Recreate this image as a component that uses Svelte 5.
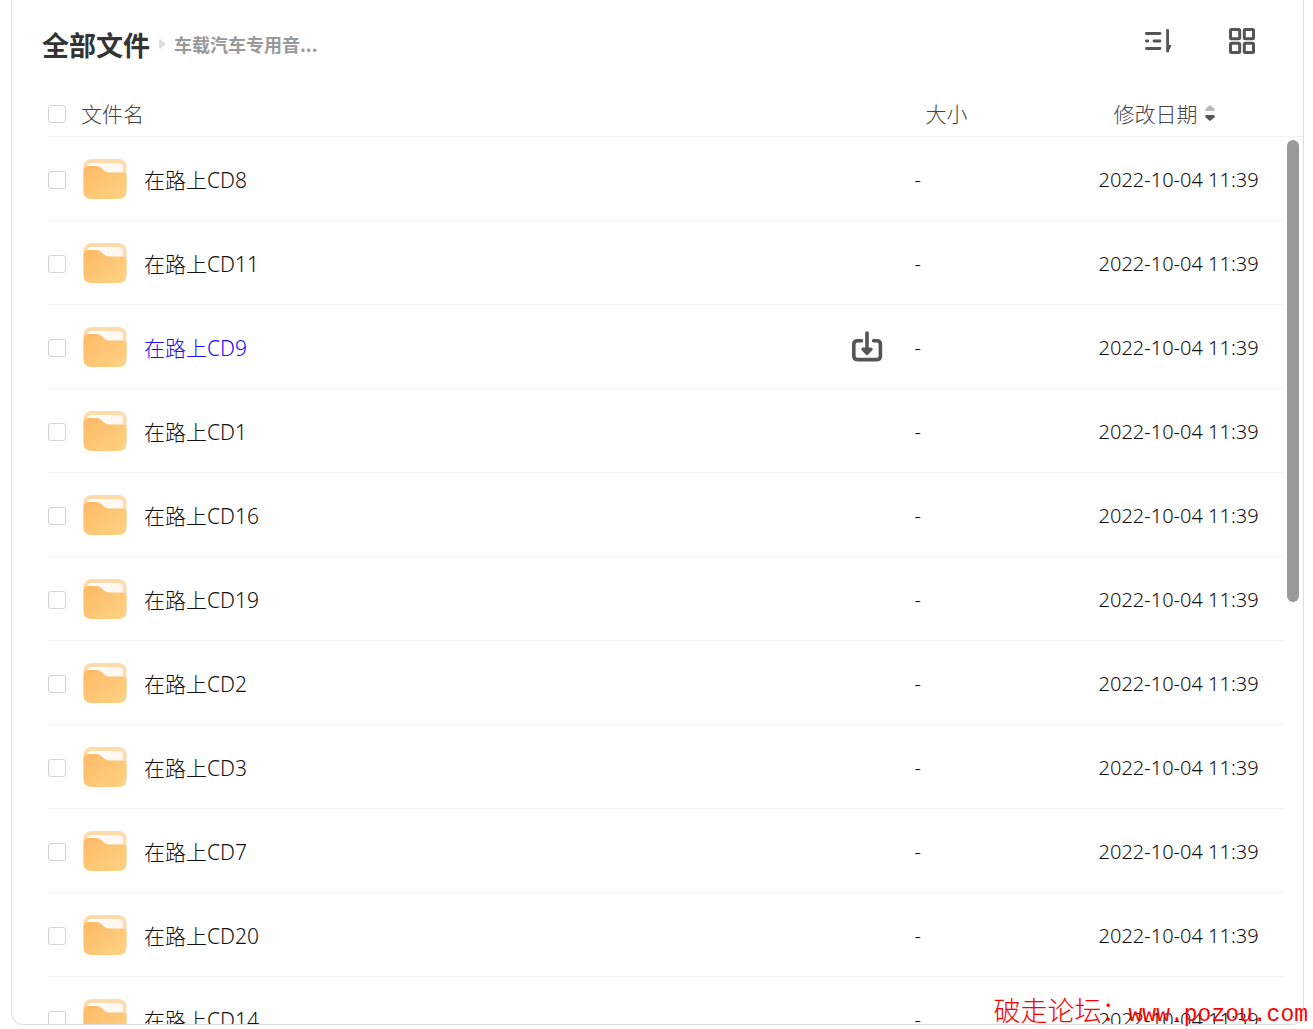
<script lang="ts">
  const names = [
    '在路上CD8',
    '在路上CD11',
    '在路上CD9',
    '在路上CD1',
    '在路上CD16',
    '在路上CD19',
    '在路上CD2',
    '在路上CD3',
    '在路上CD7',
    '在路上CD20',
    '在路上CD14'
  ];

  let files = $state(
    names.map((name) => ({ name, size: '-', date: '2022-10-04 11:39', checked: false }))
  );
  let active = $state('在路上CD9');

  let allChecked = $derived(files.every((file) => file.checked));

  function toggleAll() {
    const next = !allChecked;
    files.forEach((file) => (file.checked = next));
  }
</script>

<main class="page">
  <section class="panel">
    <header class="toolbar">
      <nav class="crumbs">
        <a class="root" href="#all">全部文件</a>
        <svg class="arrow" viewBox="0 0 8 12" aria-hidden="true">
          <path d="M1 2.2C1 1.2 2 1 2.8 1.7L6.8 5.1C7.4 5.6 7.4 6.4 6.8 6.9L2.8 10.3C2 11 1 10.8 1 9.8Z" fill="#ddd" />
        </svg>
        <a class="current" href="#folder">车载汽车专用音...</a>
      </nav>
      <div class="tools">
        <button aria-label="排序">
          <svg width="28" height="28" viewBox="0 0 28 28" fill="none" stroke="#555" stroke-width="2.8" stroke-linecap="round">
            <path d="M2.4 6.5H16M2.4 14H3.8M10 14H16M2.4 21.5H16" />
            <path d="M23.6 3.5V24" />
            <path d="M24.2 18.8H26.6L23.6 24.4Z" fill="#555" stroke-width="1.6" stroke-linejoin="round" />
          </svg>
        </button>
        <button aria-label="网格视图">
          <svg width="28" height="28" viewBox="0 0 28 28" fill="none" stroke="#555" stroke-width="3">
            <rect x="2.5" y="2.5" width="9.2" height="9.2" rx="1" />
            <rect x="16.3" y="2.5" width="9.2" height="9.2" rx="1" />
            <rect x="2.5" y="16.3" width="9.2" height="9.2" rx="1" />
            <rect x="16.3" y="16.3" width="9.2" height="9.2" rx="1" />
          </svg>
        </button>
      </div>
    </header>

    <div class="list">
      <table>
        <thead>
          <tr>
            <th><input type="checkbox" aria-label="全选" checked={allChecked} onchange={toggleAll} /></th>
            <th>文件名</th>
            <th></th>
            <th class="size">大小</th>
            <th class="date">
              <button class="sort">
                修改日期
                <svg width="10" height="16" viewBox="0 0 10 16" aria-hidden="true">
                  <path d="M4.2 .6Q5 0 5.8 .6L9.4 3.8Q10.2 6 8.8 6H1.2Q-.2 6 .6 3.8Z" fill="#bbb" />
                  <path d="M4.2 15.4Q5 16 5.8 15.4L9.4 12.2Q10.2 10 8.8 10H1.2Q-.2 10 .6 12.2Z" fill="#555" />
                </svg>
              </button>
            </th>
          </tr>
        </thead>
        <tbody>
          {#each files as file}
            <tr onmouseenter={() => (active = file.name)}>
              <td><input type="checkbox" aria-label={file.name} bind:checked={file.checked} /></td>
              <td class="name">
                <svg width="48" height="44" viewBox="0 -1 48 44" aria-hidden="true">
                  <defs>
                    <linearGradient id="front" x1="0" y1="0" x2="1" y2="1">
                      <stop offset="0" stop-color="#ffb966" />
                      <stop offset="1" stop-color="#fcd382" />
                    </linearGradient>
                    <linearGradient id="paper" x1="0" y1="0" x2="1" y2="0">
                      <stop offset="0" stop-color="#fff" />
                      <stop offset="1" stop-color="#fff6ee" />
                    </linearGradient>
                  </defs>
                  <rect x="2.5" y="1" width="43" height="38" rx="8" fill="#ffdaaa" />
                  <path d="M6 9Q7 5 11 5H38Q42 5 42 9V17H6Z" fill="url(#paper)" />
                  <path d="M2.5 13Q2.5 8 8 8H15.5Q18.5 8 20.5 10L23 12.5Q25 14.6 28 14.6H41Q45.5 14.6 45.5 18V33Q45.5 41 37.5 41H10.5Q2.5 41 2.5 33Z" fill="url(#front)" />
                </svg>
                <a href="#file" class:active={file.name === active}>{file.name}</a>
              </td>
              <td>
                {#if file.name === active}
                  <button aria-label="下载">
                    <svg width="32" height="32" viewBox="0 0 32 32" fill="none" stroke="#555" stroke-width="3.6" stroke-linecap="round">
                      <path d="M10.5 9.8H6.5Q2.8 9.8 2.8 13.5V25Q2.8 28.6 6.5 28.6H26Q29.4 28.6 29.4 25V13.5Q29.4 9.8 26 9.8H22.6" />
                      <path d="M16 2V18" />
                      <path d="M12 18.2H20L16 22.4Z" fill="#555" stroke-width="3.4" stroke-linejoin="round" />
                    </svg>
                  </button>
                {/if}
              </td>
              <td>{file.size}</td>
              <td>{file.date}</td>
            </tr>
          {/each}
        </tbody>
      </table>
      <div class="thumb"></div>
    </div>
  </section>
  <div class="watermark">破走论坛：<span>www.pozou.com</span></div>
</main>

<style>
  :global(body) {
    margin: 0;
    background: #fff;
  }

  .page {
    display: flex;
    position: relative;
    height: 100vh;
    box-sizing: border-box;
    padding: 0 9px 4px 11px;
    overflow: hidden;
    font-family: 'Noto Sans', 'Noto Sans CJK SC Light', 'Noto Sans CJK SC', sans-serif;
    font-size: 20px;
    font-weight: 300;
    color: #111;
  }

  .panel {
    flex: 1;
    display: flex;
    flex-direction: column;
    min-width: 0;
    border: 1px solid #ddd;
    border-top: 0;
    border-radius: 0 0 12px 12px;
    overflow: hidden;
  }

  a {
    color: inherit;
    text-decoration: none;
  }

  button {
    display: flex;
    padding: 0;
    border: 0;
    background: none;
    font: inherit;
    color: inherit;
    cursor: pointer;
  }

  .toolbar {
    display: flex;
    justify-content: space-between;
    align-items: flex-start;
    flex: none;
    height: 92px;
    box-sizing: border-box;
    padding: 25px 47px 0 30px;
  }

  .crumbs {
    display: flex;
    align-items: center;
    height: 38px;
    font-family: 'Noto Sans CJK SC', sans-serif;
    font-weight: 700;
  }

  .root {
    font-size: 27px;
    color: #333;
  }

  .arrow {
    width: 8px;
    height: 12px;
    margin: 0 8px;
  }

  .current {
    font-size: 18px;
    color: #999;
  }

  .tools {
    display: flex;
    gap: 56px;
    padding-top: 2px;
  }

  .list {
    position: relative;
    flex: 1;
    min-height: 0;
    padding-left: 36px;
    overflow: hidden;
  }

  table,
  thead,
  tbody {
    display: block;
  }

  tr {
    display: grid;
    grid-template-columns: 33px 1fr 64px 184px 15%;
    align-items: center;
    box-sizing: border-box;
  }

  thead tr {
    height: 45px;
    padding: 0 19px 2px 0;
    border-bottom: 1px solid #f2f2f2;
  }

  tbody tr {
    height: 84px;
    margin-right: 19px;
    padding-top: 1px;
    border-bottom: 1px solid #f2f2f2;
  }

  th,
  td {
    padding: 0;
    text-align: left;
    white-space: nowrap;
  }

  th {
    font-size: 21px;
    font-weight: 300;
    color: #444;
  }

  .size {
    padding-left: 11px;
  }

  .date {
    padding-left: 15px;
  }

  .sort {
    align-items: center;
    gap: 7px;
  }

  input {
    display: block;
    appearance: none;
    width: 18px;
    height: 18px;
    margin: 2px 0 0;
    border: 1px solid #d4d4d4;
    border-radius: 3px;
    background: #fff;
  }

  input:checked {
    background: #06a7ff;
  }

  .name {
    display: flex;
    align-items: center;
    gap: 15px;
    font-size: 21px;
  }

  .active {
    color: #1a0dff;
  }

  .thumb {
    position: absolute;
    top: 48px;
    right: 4px;
    width: 12px;
    height: 462px;
    border-radius: 6px;
    background: #999;
  }

  .watermark {
    position: absolute;
    right: 5px;
    bottom: 0;
    font-family: 'Noto Sans CJK SC Light', 'Noto Sans CJK SC', serif;
    font-size: 27px;
    font-weight: 300;
    line-height: 28px;
    color: #f00;
    white-space: nowrap;
  }

  .watermark span {
    font-family: 'Liberation Mono', monospace;
    font-size: 23px;
  }
</style>
